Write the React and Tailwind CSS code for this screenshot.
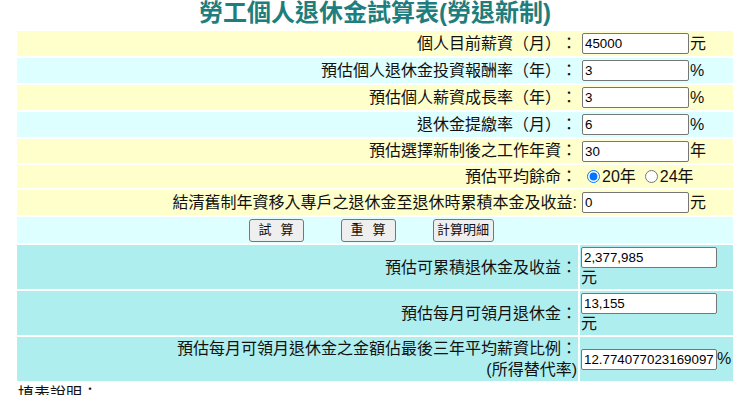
import { useState } from 'react'

// 勞退新制試算表：上半部為輸入列，下半部為試算結果
const inputRows = [
  { label: '個人目前薪資（月）：', value: '45000', unit: '元', bg: 'bg-[#ffffcc]' },
  { label: '預估個人退休金投資報酬率（年）：', value: '3', unit: '%', bg: 'bg-[#ddffff]' },
  { label: '預估個人薪資成長率（年）：', value: '3', unit: '%', bg: 'bg-[#ffffcc]' },
  { label: '退休金提繳率（月）：', value: '6', unit: '%', bg: 'bg-[#ddffff]' },
  { label: '預估選擇新制後之工作年資：', value: '30', unit: '年', bg: 'bg-[#ffffcc]' },
]

const inputCls =
  'h-[21px] rounded-[2px] border border-[#767676] bg-white px-[2px] text-[13.33px] text-black outline-none'

function FieldRow({ label, value, unit, bg, h = 'h-[25px]' }) {
  return (
    <div className={`flex items-center ${h} ${bg}`}>
      <div className="w-[561px] pr-[1px] text-right">{label}</div>
      <div className="ml-[2px] flex items-center">
        <input type="text" defaultValue={value} className={`ml-[2px] w-[107px] ${inputCls}`} />
        <span className="ml-[1px]">{unit}</span>
      </div>
    </div>
  )
}

function ResultRow({ children, value, unit, inline }) {
  return (
    <div className="flex h-[44px] gap-[2px]">
      <div className="flex w-[561px] flex-col items-end justify-center bg-[#afeeee] pr-[1px] text-right leading-[21px]">
        {children}
      </div>
      <div
        className={`flex flex-1 bg-[#afeeee] pl-[1px] ${
          inline ? 'flex-row items-center' : 'flex-col justify-center'
        }`}
      >
        <input type="text" readOnly value={value} className={`w-[136px] ${inputCls}`} />
        <span className="leading-[20px]">{unit}</span>
      </div>
    </div>
  )
}

export default function App() {
  const [life, setLife] = useState('20')

  return (
    <div className="h-[395px] w-[739px] overflow-hidden bg-white font-['Liberation_Sans','Noto_Sans_CJK_TC',sans-serif] text-[16px] text-[#111] [text-spacing-trim:space-all]">
      <div className="ml-[17px] w-[716px]">
        <h1 className="h-[31px] text-center text-[24px] font-bold leading-[26px] text-[#1e7d7d]">
          勞工個人退休金試算表(勞退新制)
        </h1>

        <div className="flex flex-col gap-[2px]">
          {inputRows.slice(0, 4).map((r) => (
            <FieldRow key={r.label} {...r} />
          ))}
          <FieldRow {...inputRows[4]} h="h-[24px]" />

          <div className="flex h-[23px] items-center bg-[#ffffcc]">
            <div className="w-[561px] pr-[1px] text-right">預估平均餘命：</div>
            <div className="ml-[2px] flex items-center">
              <label className="flex items-center">
                <input
                  type="radio"
                  name="life"
                  checked={life === '20'}
                  onChange={() => setLife('20')}
                  className="ml-[7px] mr-[2px] h-[13px] w-[13px]"
                />
                20年
              </label>
              <label className="ml-[4px] flex items-center">
                <input
                  type="radio"
                  name="life"
                  checked={life === '24'}
                  onChange={() => setLife('24')}
                  className="ml-[5px] mr-[2px] h-[13px] w-[13px]"
                />
                24年
              </label>
            </div>
          </div>

          <FieldRow
            label="結清舊制年資移入專戶之退休金至退休時累積本金及收益:"
            value="0"
            unit="元"
            bg="bg-[#ffffcc]"
          />

          <div className="flex h-[26px] items-center justify-center gap-[37px] bg-[#ddffff] pr-[8px] text-[13px]">
            <button className="flex h-[23px] w-[55px] items-center justify-center gap-[9px] rounded-[3px] border border-[#767676] bg-[#efefef]">
              <span>試</span>
              <span>算</span>
            </button>
            <button className="flex h-[23px] w-[55px] items-center justify-center gap-[9px] rounded-[3px] border border-[#767676] bg-[#efefef]">
              <span>重</span>
              <span>算</span>
            </button>
            <button className="flex h-[23px] w-[61px] items-center justify-center rounded-[3px] border border-[#767676] bg-[#efefef]">
              計算明細
            </button>
          </div>

          <ResultRow value="2,377,985" unit="元">
            預估可累積退休金及收益：
          </ResultRow>
          <ResultRow value="13,155" unit="元">
            預估每月可領月退休金：
          </ResultRow>
          <ResultRow value="12.774077023169097" unit="%" inline>
            <span>預估每月可領月退休金之金額佔最後三年平均薪資比例：</span>
            <span>(所得替代率)</span>
          </ResultRow>
        </div>
      </div>

      <p className="mt-[1px] pl-[18px] leading-[24px]">填表說明：</p>
    </div>
  )
}
